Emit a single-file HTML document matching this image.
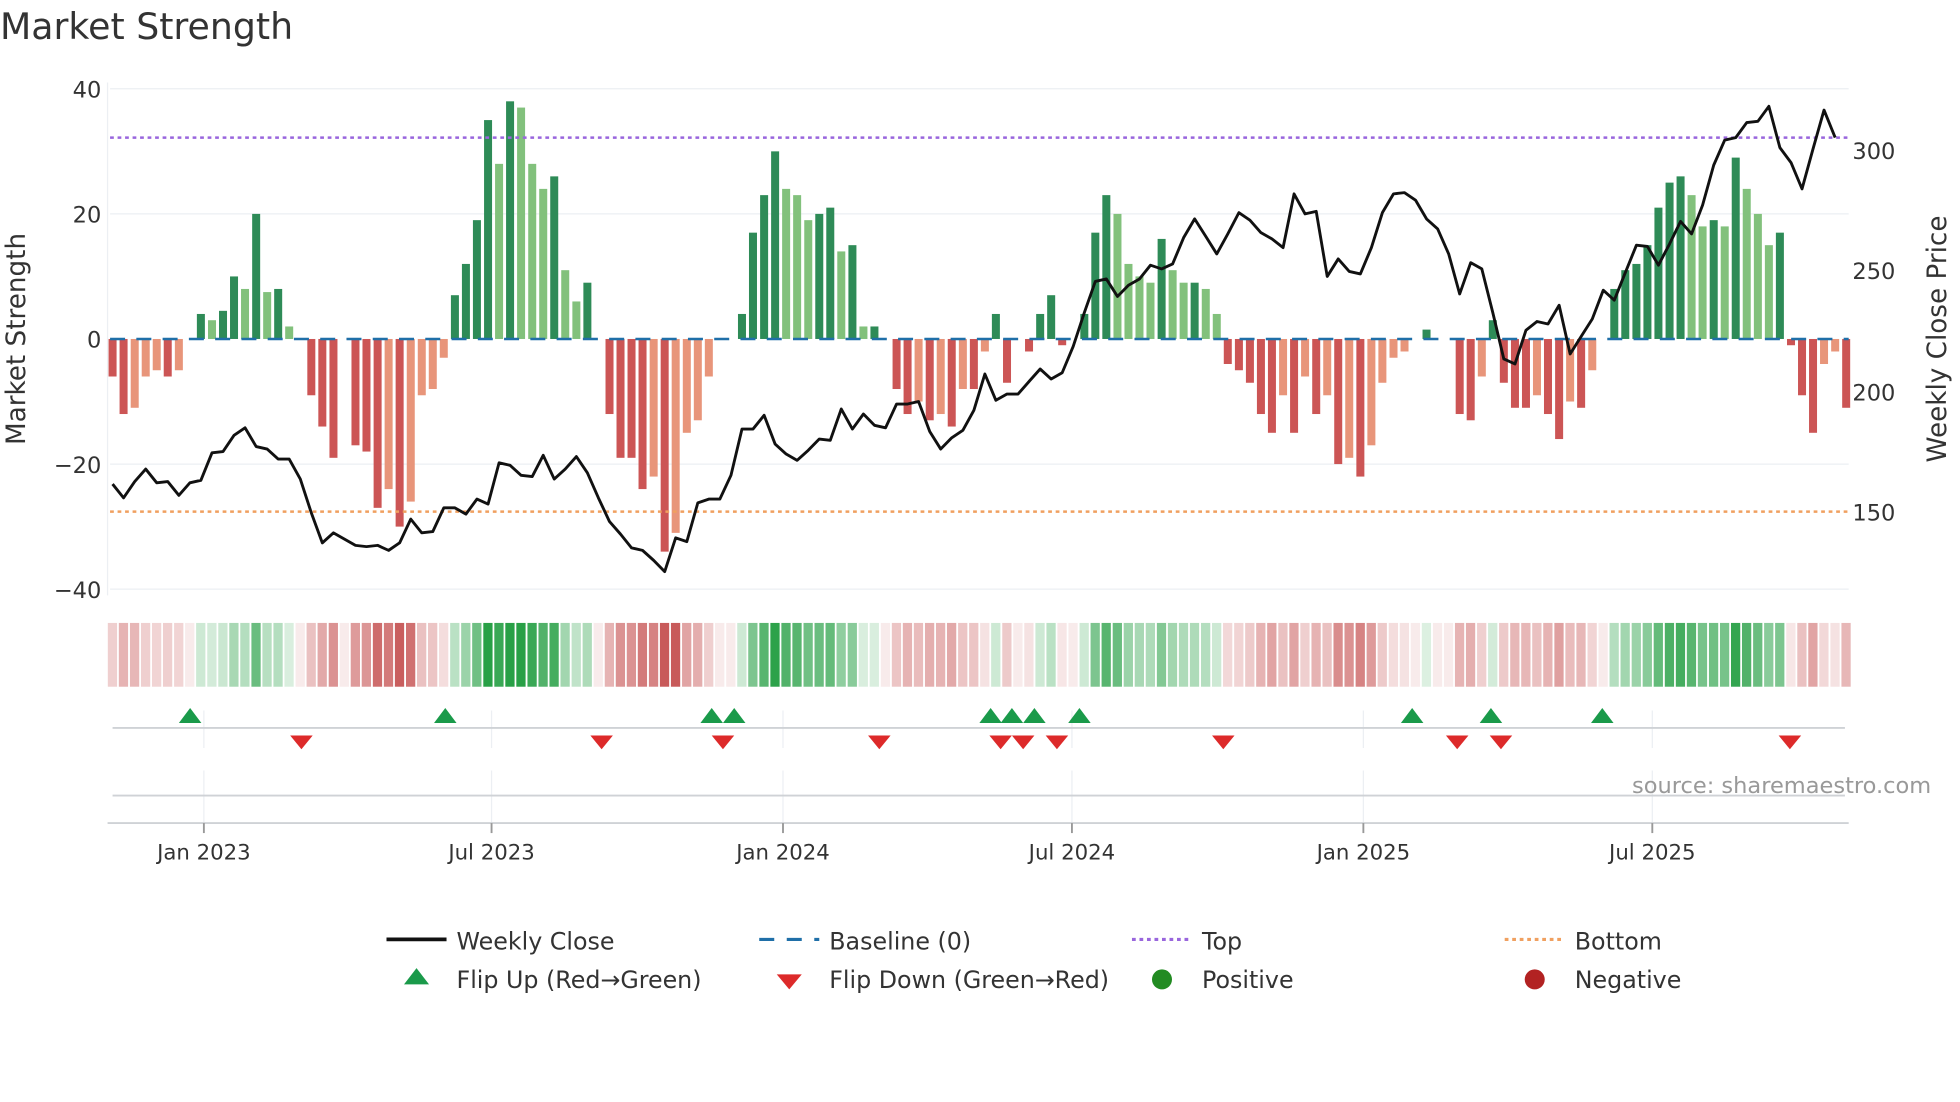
<!DOCTYPE html>
<html><head><meta charset="utf-8"><style>
html,body{margin:0;padding:0;background:#fff;width:1960px;height:1102px;overflow:hidden}
svg{display:block}
text{font-family:"DejaVu Sans","Liberation Sans",sans-serif;fill:#333}
</style></head><body>
<svg id="s" width="1960" height="1102" viewBox="0 0 1567 881" preserveAspectRatio="none" xmlns="http://www.w3.org/2000/svg">
<text x="0" y="31" font-size="29">Market Strength</text>
<g stroke="#eceff3" stroke-width="1">
<line x1="88" y1="71" x2="1478" y2="71"/><line x1="88" y1="171" x2="1478" y2="171"/>
<line x1="88" y1="371" x2="1478" y2="371"/><line x1="88" y1="471" x2="1478" y2="471"/>
<line x1="86" y1="66" x2="86" y2="476"/>
<line x1="163" y1="568" x2="163" y2="598"/><line x1="393" y1="568" x2="393" y2="598"/><line x1="626" y1="568" x2="626" y2="598"/><line x1="857" y1="568" x2="857" y2="598"/><line x1="1090" y1="568" x2="1090" y2="598"/><line x1="1321" y1="568" x2="1321" y2="598"/>
<line x1="163" y1="616" x2="163" y2="658"/><line x1="393" y1="616" x2="393" y2="658"/><line x1="626" y1="616" x2="626" y2="658"/><line x1="857" y1="616" x2="857" y2="658"/><line x1="1090" y1="616" x2="1090" y2="658"/><line x1="1321" y1="616" x2="1321" y2="658"/>
</g>
<g font-size="18" text-anchor="end">
<text x="81" y="78">40</text><text x="81" y="178">20</text><text x="81" y="278">0</text><text x="81" y="378">−20</text><text x="81" y="478">−40</text>
</g>
<g font-size="18">
<text x="1481" y="127">300</text><text x="1481" y="223">250</text><text x="1481" y="320">200</text><text x="1481" y="416">150</text>
</g>
<text transform="translate(20,271) rotate(-90)" font-size="21" text-anchor="middle">Market Strength</text>
<text transform="translate(1556,271) rotate(-90)" font-size="21" text-anchor="middle">Weekly Close Price</text>
<g id="bars"></g>
<line x1="88" y1="271" x2="1478" y2="271" stroke="#1f6fa8" stroke-width="2" stroke-dasharray="12,9"/>
<line x1="88" y1="110" x2="1478" y2="110" stroke="#9966dd" stroke-width="2" stroke-dasharray="3,3"/>
<line x1="88" y1="409" x2="1478" y2="409" stroke="#f0a060" stroke-width="2" stroke-dasharray="3,3"/>
<polyline id="price" fill="none" stroke="#111" stroke-width="2.3" stroke-linejoin="round"/>
<g id="heat"></g>
<line x1="90" y1="582" x2="1475" y2="582" stroke="#cfd2d6" stroke-width="1.5"/>
<line x1="90" y1="636" x2="1475" y2="636" stroke="#cfd2d6" stroke-width="1.5"/>
<line x1="86" y1="658" x2="1478" y2="658" stroke="#cfd2d6" stroke-width="1.5"/>
<g id="mk"></g>
<g stroke="#999" stroke-width="1.5"><line x1="163" y1="658" x2="163" y2="666"/><line x1="393" y1="658" x2="393" y2="666"/><line x1="626" y1="658" x2="626" y2="666"/><line x1="857" y1="658" x2="857" y2="666"/><line x1="1090" y1="658" x2="1090" y2="666"/><line x1="1321" y1="658" x2="1321" y2="666"/></g>
<g font-size="17" text-anchor="middle">
<text x="163" y="687">Jan 2023</text><text x="393" y="687">Jul 2023</text><text x="626" y="687">Jan 2024</text><text x="857" y="687">Jul 2024</text><text x="1090" y="687">Jan 2025</text><text x="1321" y="687">Jul 2025</text>
</g>
<text x="1544" y="634" font-size="18" text-anchor="end" style="fill:#999">source: sharemaestro.com</text>
<g font-size="19">
<line x1="309" y1="751" x2="357" y2="751" stroke="#111" stroke-width="3"/><text x="365" y="759">Weekly Close</text>
<line x1="607" y1="751" x2="655" y2="751" stroke="#1f6fa8" stroke-width="2.5" stroke-dasharray="12,10"/><text x="663" y="759">Baseline (0)</text>
<line x1="905" y1="751" x2="953" y2="751" stroke="#9966dd" stroke-width="2.5" stroke-dasharray="3,3"/><text x="961" y="759">Top</text>
<line x1="1203" y1="751" x2="1251" y2="751" stroke="#f0a060" stroke-width="2.5" stroke-dasharray="3,3"/><text x="1259" y="759">Bottom</text>
<polygon points="333,774 323,787 343,787" fill="#1a9a4a"/><text x="365" y="790">Flip Up (Red→Green)</text>
<polygon points="621,779 641,779 631,791" fill="#dd2a2a"/><text x="663" y="790">Flip Down (Green→Red)</text>
<circle cx="929" cy="783" r="8" fill="#228b22"/><text x="961" y="790">Positive</text>
<circle cx="1227" cy="783" r="8" fill="#b22222"/><text x="1259" y="790">Negative</text>
</g>
</svg>
<script>
var v=[-6,-12,-11,-6,-5,-6,-5,0,4,3,4.5,10,8,20,7.5,8,2,0,-9,-14,-19,0,-17,-18,-27,-24,-30,-26,-9,-8,-3,7,12,19,35,28,38,37,28,24,26,11,6,9,0,-12,-19,-19,-24,-22,-34,-31,-15,-13,-6,0,0,4,17,23,30,24,23,19,20,21,14,15,2,2,0,-8,-12,-10,-13,-12,-14,-8,-8,-2,4,-7,0,-2,4,7,-1,0,4,17,23,20,12,10,9,16,11,9,9,8,4,-4,-5,-7,-12,-15,-9,-15,-6,-12,-9,-20,-19,-22,-17,-7,-3,-2,0,1.5,0,0,-12,-13,-6,3,-7,-11,-11,-9,-12,-16,-10,-11,-5,0,8,11,12,15,21,25,26,23,18,19,18,29,24,20,15,17,-1,-9,-15,-4,-2,-11];
var p=[387,398,385,375,386,385,396,386,384,362,361,348,342,357,359,367,367,383,410,434,426,431,436,437,436,440,434,415,426,425,406,406,411,399,403,370,372,380,381,364,383,375,365,378,398,417,427,438,440,448,457,430,433,402,399,399,380,343,343,332,355,363,368,360,351,352,327,343,331,340,342,323,323,321,345,359,350,344,328,299,320,315,315,305,295,303,298,277,250,225,223,237,228,223,212,215,211,190,175,189,203,187,170,176,186,191,198,155,171,169,221,207,217,219,198,170,155,154,160,175,183,203,235,210,215,250,287,291,264,257,259,244,283,269,255,232,240,218,196,197,212,195,177,187,164,132,112,110,98,97,85,118,130,151,119,88,110];
var ups=[152,356,569,587,792,809,827,863,1129,1192,1281],dns=[241,481,578,703,800,818,845,978,1165,1200,1431];
var n=v.length,dx=(1476-90)/(n-1),b='',h='',pts=[];
function mix(a,c,t){return 'rgb('+a.map(function(x,i){return Math.round(x+(c[i]-x)*t)}).join(',')+')'}
for(var i=0;i<n;i++){var x=90+i*dx,val=v[i],pv=i?v[i-1]:0,c;
 if(val>0)c=(Math.abs(val)>=Math.abs(pv)||pv<=0)?'#2e8b57':'#82c17c';else c=(Math.abs(val)>=Math.abs(pv)||pv>=0)?'#cc5555':'#e8957a';
 if(val!==0){var y=val>0?271-val*5:271;b+='<rect x="'+(x-3.2).toFixed(1)+'" y="'+y+'" width="6.4" height="'+Math.abs(val*5)+'" fill="'+c+'"/>';}
 var t=Math.min(1,Math.abs(val)/35+0.12),hc=val>0?mix([255,255,255],[40,160,70],t):mix([255,255,255],[200,90,90],t);
 h+='<rect x="'+(x-3.8).toFixed(1)+'" y="498" width="7.4" height="51" fill="'+hc+'"/>';
 pts.push(x.toFixed(1)+','+p[i]);}
document.getElementById('bars').innerHTML=b;document.getElementById('heat').innerHTML=h;
document.getElementById('price').setAttribute('points',pts.join(' '));
var m='';ups.forEach(function(x){m+='<polygon points="'+x+',566 '+(x-9)+',578 '+(x+9)+',578" fill="#1a9a4a"/>'});
dns.forEach(function(x){m+='<polygon points="'+(x-9)+',588 '+(x+9)+',588 '+x+',599" fill="#dd2a2a"/>'});
document.getElementById('mk').innerHTML=m;
</script>
</body></html>
